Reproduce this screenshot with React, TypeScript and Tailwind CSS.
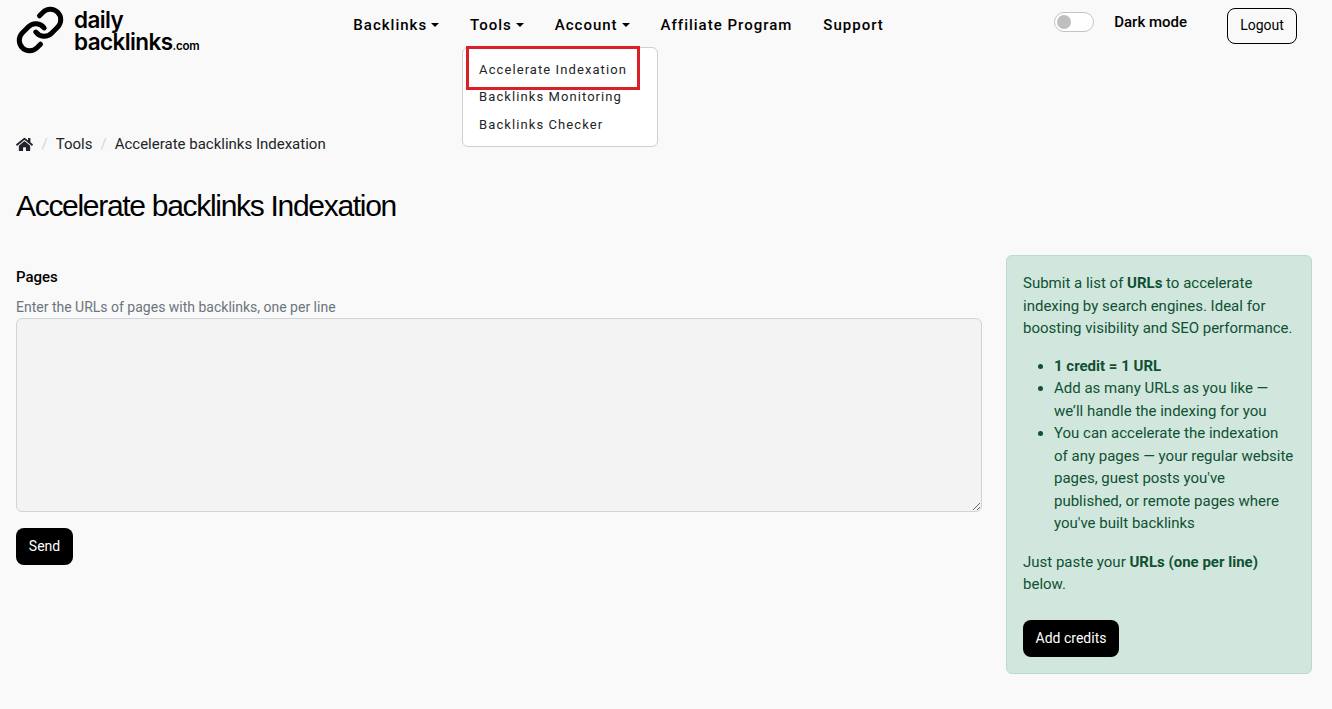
import { FaHome } from "react-icons/fa";

const NAV_ITEMS = [
  { label: "Backlinks", caret: true },
  { label: "Tools", caret: true },
  { label: "Account", caret: true },
  { label: "Affiliate Program", caret: false },
  { label: "Support", caret: false },
];

function Logo() {
  return (
    <div className="flex items-start">
      <svg width="50" height="50" viewBox="0 0 24 24" fill="none" stroke="#000" strokeWidth="2.4" strokeLinecap="round" strokeLinejoin="round" className="mt-[5px] ml-[-1px]">
        <path d="M10 13a5 5 0 0 0 7.54.54l3-3a5 5 0 0 0-7.07-7.07l-1.72 1.71" />
        <path d="M14 11a5 5 0 0 0-7.54-.54l-3 3a5 5 0 0 0 7.07 7.07l1.71-1.71" />
      </svg>
      <div className="ml-[9px] mt-[9px] font-['Inter'] font-semibold text-[22.5px] leading-[22px] tracking-[-0.6px] text-black">
        <div>daily</div>
        <div>
          backlinks<span className="text-[11.5px] tracking-[-0.2px]">.com</span>
        </div>
      </div>
    </div>
  );
}

function Dropdown() {
  return (
    <div className="absolute left-[-8px] top-[32px] w-[196px] h-[100px] bg-white border border-[#cfcfcf] rounded-[6px] pt-[12px] pl-[16px] text-[13px] tracking-[1.08px] font-[450] text-[#212529]">
      <div className="h-[27px] leading-[20px]">Accelerate Indexation</div>
      <div className="h-[28px] leading-[20px]">Backlinks Monitoring</div>
      <div className="h-[27px] leading-[20px]">Backlinks Checker</div>
      {/* red annotation drawn on the screenshot */}
      <div className="absolute left-[3px] top-[-2px] w-[174px] h-[44px] border-[3px] border-[#dc1f26]" />
    </div>
  );
}

function Header() {
  return (
    <header className="flex items-start h-[60px]">
      <Logo />
      <nav className="flex items-center ml-[154px] mt-[15px] gap-[31px] text-[15px] leading-[20px] tracking-[1px] font-medium text-black">
        {NAV_ITEMS.map((item) => (
          <div key={item.label} className="relative flex items-center">
            <span>{item.label}</span>
            {item.caret && (
              <span className="ml-[4px] w-0 h-0 border-x-[4px] border-x-transparent border-t-[4px] border-t-black" />
            )}
            {item.label === "Tools" && <Dropdown />}
          </div>
        ))}
      </nav>
      <div className="ml-auto flex items-start mr-[19px] mt-[8px]">
        <div className="mt-[4px] w-[40px] h-[20px] rounded-full border border-[#c4c4c4] bg-white flex items-center pl-[2px]">
          <span className="w-[14px] h-[14px] rounded-full bg-[#bfbfbf]" />
        </div>
        <span className="ml-[20px] mt-[3px] text-[15px] leading-[22px] font-medium text-black">Dark mode</span>
        <button className="ml-[40px] w-[70px] h-[36px] pb-[1px] rounded-[8px] border border-black text-[14px] text-black">Logout</button>
      </div>
    </header>
  );
}

function Breadcrumb() {
  return (
    <div className="flex items-center mt-[73px] text-[15px] leading-[22px] text-[#212529]">
      <FaHome className="w-[17px] h-[17px] text-[#212529]" />
      <span className="ml-[8.5px] mr-[8px] text-[#d3d5d7]">/</span>
      <span>Tools</span>
      <span className="mx-[8px] text-[#d3d5d7]">/</span>
      <span>Accelerate backlinks Indexation</span>
    </div>
  );
}

function InfoCard() {
  return (
    <aside className="w-[306px] h-[419px] shrink-0 bg-[#d1e7dd] border border-[#badbcc] rounded-[6px] p-[16px] text-[15px] leading-[22.5px] text-[#0f5132]">
      <p>
        Submit a list of <b className="font-bold">URLs</b> to accelerate indexing by search engines. Ideal for boosting visibility and SEO performance.
      </p>
      <ul className="list-disc mt-[15px] pl-[31px]">
        <li><b className="font-bold">1 credit = 1 URL</b></li>
        <li>Add as many URLs as you like — we’ll handle the indexing for you</li>
        <li>You can accelerate the indexation of any pages — your regular website pages, guest posts you've published, or remote pages where you've built backlinks</li>
      </ul>
      <p className="mt-[16px]">
        Just paste your <b className="font-bold">URLs (one per line)</b> below.
      </p>
      <button className="mt-[24px] block w-[96px] h-[37px] bg-black text-white rounded-[8px] text-[14px]">Add credits</button>
    </aside>
  );
}

export default function App() {
  return (
    <div className="min-h-[709px] bg-[#f9f9f9] px-[16px] font-['Roboto',sans-serif]">
      <Header />
      <Breadcrumb />
      <h1 className="mt-[31px] font-['Liberation_Sans',sans-serif] font-normal text-[30px] leading-[40px] tracking-[-1.3px] text-black">
        Accelerate backlinks Indexation
      </h1>
      <div className="flex gap-[24px] mt-[29px] mr-[4px]">
        <section className="flex-1">
          <label className="block mt-[11px] text-[15px] leading-[22px] font-medium text-black">Pages</label>
          <p className="mt-[9px] text-[14px] leading-[21px] text-[#6c757d]">Enter the URLs of pages with backlinks, one per line</p>
          <textarea className="block w-full h-[194px] bg-[#f3f3f3] border border-[#ced4da] rounded-[6px]" />
          <button className="mt-[16px] block w-[57px] h-[37px] bg-black text-white rounded-[8px] text-[14px]">Send</button>
        </section>
        <InfoCard />
      </div>
    </div>
  );
}
